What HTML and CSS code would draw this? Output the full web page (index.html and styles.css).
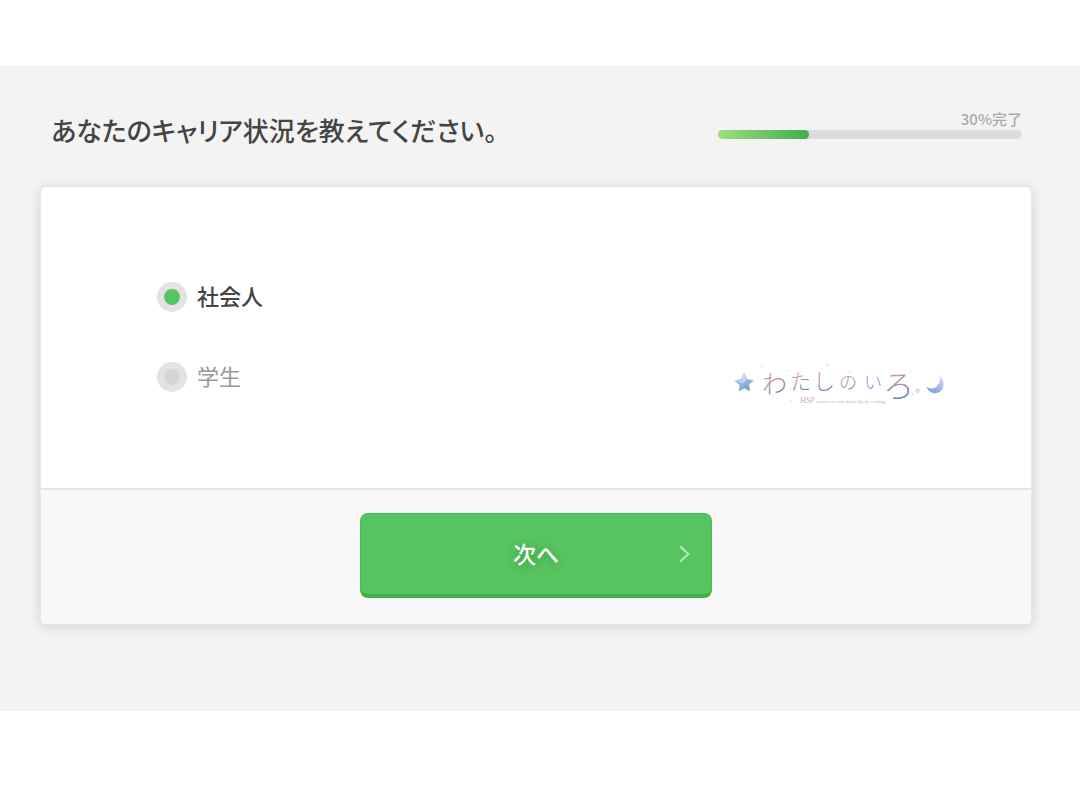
FILE: index.html
```html
<!DOCTYPE html>
<html lang="ja">
<head>
  <meta charset="UTF-8">
  <meta name="viewport" content="width=device-width, initial-scale=1.0">
  <title>キャリア状況</title>
  <link rel="stylesheet" href="styles.css">
</head>
<body>
  <main class="survey">
    <header class="survey-header">
      <h1>あなたのキャリア状況を教えてください。</h1>
      <div class="progress">
        <span class="progress-label">30%完了</span>
        <div class="progress-bar">
          <div class="progress-bar-inner" style="width: 30%"></div>
        </div>
      </div>
    </header>

    <form class="card">
      <div class="card-body">
        <div class="options">
          <label class="option">
            <input type="radio" name="career" value="worker" checked>
            <span>社会人</span>
          </label>
          <label class="option">
            <input type="radio" name="career" value="student">
            <span>学生</span>
          </label>
        </div>

        <svg class="logo" viewBox="0 -4 216 60" role="img" aria-label="わたしのいろ">
          <defs>
            <linearGradient id="star-fill" x1="0" y1="0" x2="0.6" y2="1">
              <stop offset="0" stop-color="#d3e1f3"/>
              <stop offset="0.5" stop-color="#9bb9df"/>
              <stop offset="1" stop-color="#7798ca"/>
            </linearGradient>
            <linearGradient id="moon-fill" x1="1" y1="0" x2="0.3" y2="1">
              <stop offset="0" stop-color="#d6e3f4"/>
              <stop offset="0.5" stop-color="#a5c1e6"/>
              <stop offset="1" stop-color="#7f9fd3"/>
            </linearGradient>
            <linearGradient id="ink" x1="0" y1="0" x2="0.4" y2="1">
              <stop offset="0.3" stop-color="#e59aa6"/>
              <stop offset="0.6" stop-color="#ae90b0"/>
              <stop offset="0.85" stop-color="#7483b0"/>
            </linearGradient>
          </defs>
          <path fill="url(#star-fill)" stroke="#a5bee0" stroke-width="0.6" stroke-linejoin="round" d="M10 11.5 L13 17.5 L19.3 18.3 L14.8 22.7 L16 29 L10.4 26.3 L5 29.3 L5.7 23 L1 18.8 L7.4 17.6 Z"/>
          <path fill="#edf4fc" opacity="0.6" d="M10 13 L12 18.5 L9 21 L4 19.4 L8.2 18.2 Z"/>
          <g class="logo-name" fill="url(#ink)">
            <text x="28" y="31" font-size="25">わ</text>
            <text x="56" y="27" font-size="21">た</text>
            <text x="79" y="27" font-size="22">し</text>
            <text x="105" y="27" font-size="18">の</text>
            <text x="130" y="27" font-size="18" fill="#7c9bd0">い</text>
            <text x="149" y="35" font-size="31">ろ</text>
            <text x="181" y="30" font-size="12">。</text>
          </g>
          <text class="logo-tagline" x="66" y="41"><tspan font-size="8">HSP</tspan> creates a wide daily life by writing</text>
          <g fill="#b9a8ca">
            <circle cx="93" cy="3" r="0.7"/>
            <circle cx="28" cy="5" r="0.5"/>
            <circle cx="53" cy="9" r="0.6"/>
            <circle cx="57" cy="39" r="0.5"/>
            <circle cx="84" cy="46" r="0.6"/>
            <circle cx="116" cy="10" r="0.5"/>
            <circle cx="176" cy="9" r="0.5"/>
            <circle cx="179" cy="32" r="0.7"/>
          </g>
          <path fill="url(#moon-fill)" d="M205.500 14 C210 18 211 23 208 27.500 C203 34 195 31.500 192.500 25 C197 27.500 201.500 26.500 204 23 C206 20 206.200 17 205.500 14 Z"/>
        </svg>
      </div>

      <div class="card-footer">
        <button type="submit" class="next-button">
          次へ
          <svg class="chevron" viewBox="0 0 10 16" aria-hidden="true">
            <path d="M1 1 L8.500 8 L1 15" fill="none" stroke="currentColor" stroke-width="2"/>
          </svg>
        </button>
      </div>
    </form>
  </main>
</body>
</html>
```
FILE: styles.css
```css
* {
  box-sizing: border-box;
}

body {
  margin: 0;
  padding: 66px 0;
  background: #fff;
  color: #444;
  font-family: "Noto Sans CJK JP", sans-serif;
}

.survey {
  padding: 40px 48px 86px 40px;
  background: #f3f3f3;
}

.survey-header {
  display: flex;
  justify-content: space-between;
  align-items: flex-start;
  padding: 0 10px 0 11px;
  margin-bottom: 32px;
}

h1 {
  margin: 0;
  font-size: 26px;
  font-weight: 500;
  line-height: 48px;
  font-feature-settings: "palt";
  font-kerning: none;
}

.progress {
  display: flex;
  flex-direction: column;
  width: 304px;
  padding-top: 2px;
}

.progress-label {
  align-self: flex-end;
  color: #aaa;
  font-size: 15px;
  font-weight: 500;
  line-height: 22px;
}

.progress-bar {
  height: 9px;
  border-radius: 5px;
  background: #dcdcdc;
}

.progress-bar-inner {
  height: 100%;
  border-radius: 5px;
  background: linear-gradient(to right, #9fdd7e, #3fae49);
}

.card {
  border: 1px solid #e6e6e6;
  border-radius: 6px;
  background: #fff;
  box-shadow: 0 2px 12px rgba(0, 0, 0, 0.14);
}

.card-body {
  display: flex;
  justify-content: space-between;
  align-items: flex-start;
  min-height: 301px;
  padding: 90px 81px 70px 116px;
}

.options {
  display: flex;
  flex-direction: column;
  gap: 40px;
}

.option {
  display: flex;
  align-items: center;
  gap: 10px;
  height: 40px;
  color: #999;
  font-size: 22px;
  line-height: 36px;
  cursor: pointer;
}

.option span {
  padding-bottom: 4px;
}

.option:has(input:checked) {
  color: #444;
  font-weight: 500;
}

.option input {
  appearance: none;
  width: 30px;
  height: 30px;
  margin: 0;
  border: 7px solid #e3e3e3;
  border-radius: 50%;
  background: #d6d6d6;
  cursor: pointer;
}

.option input:checked {
  background: #56c45f;
}

.logo {
  width: 216px;
  height: 60px;
  margin-top: 81px;
  overflow: visible;
}

.logo-name {
  font-family: "Noto Sans CJK JP", sans-serif;
  font-weight: 300;
}

.logo-tagline {
  fill: #cfa9c1;
  font-family: "Liberation Serif", serif;
  font-size: 5px;
  font-style: italic;
}

.card-footer {
  display: flex;
  justify-content: center;
  padding: 23px 20px 26px;
  border-top: 2px solid #e6e6e6;
  border-radius: 0 0 5px 5px;
  background: #f8f8f8;
}

.next-button {
  position: relative;
  width: 352px;
  max-width: 100%;
  height: 85px;
  padding: 0 0 3px;
  border: 1px solid #4dbb57;
  border-bottom: 4px solid #40ae4a;
  border-radius: 8px;
  background: #56c45f;
  color: #fff;
  font-family: inherit;
  font-size: 23px;
  font-weight: 500;
  text-shadow: 0 2px 8px rgba(0, 80, 0, 0.4);
  cursor: pointer;
}

.chevron {
  position: absolute;
  top: 50%;
  right: 21px;
  width: 11px;
  height: 18px;
  margin-top: -9px;
  color: #b5e8b9;
}
```
